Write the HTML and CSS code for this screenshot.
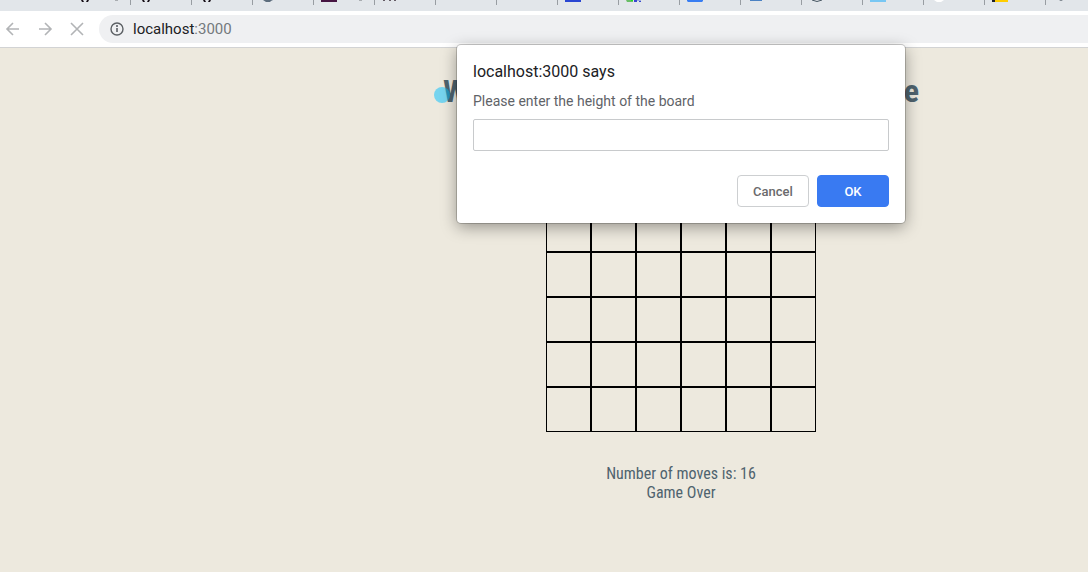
FILE: index.html
```html
<!DOCTYPE html>
<html lang="en">
<head>
<meta charset="utf-8">
<title>localhost:3000</title>
<link rel="stylesheet" href="styles.css">
</head>
<body>
<div class="tabs">
  <div class="tab"><svg class="favicon" viewBox="0 0 16 2"><path d="M4 0h2l1 2H5zM12 0h-2l-1 2h2z" fill="#181018"/></svg><i class="tab-close"></i></div>
  <div class="tab"><svg class="favicon" viewBox="0 0 16 2"><path d="M4 0h2l1 2H5zM12 0h-2l-1 2h2z" fill="#181018"/></svg></div>
  <div class="tab"><svg class="favicon" viewBox="0 0 16 2"><path d="M4 0h2l1 2H5zM12 0h-2l-1 2h2z" fill="#181018"/></svg></div>
  <div class="tab"><svg class="favicon" viewBox="0 0 16 2"><path d="M3 0h10l-2 1-1 1H6z" fill="#5d6d7d"/></svg></div>
  <div class="tab"><svg class="favicon" viewBox="0 0 16 2"><path d="M0 0h16v2H0z" fill="#461542"/></svg><i class="tab-close"></i></div>
  <div class="tab"><svg class="favicon" viewBox="0 0 16 2"><path d="M1 0h2v1H1zM7 0h2v1H7zM12 0h2v1h-2z" fill="#655c65"/></svg></div>
  <div class="tab"></div>
  <div class="tab"></div>
  <div class="tab"><svg class="favicon" viewBox="0 0 16 2"><path d="M0 0h16v2H0z" fill="#2946d2"/></svg></div>
  <div class="tab"><svg class="favicon" viewBox="0 0 16 2"><path d="M0 0h7v2H1z" fill="#69bd66"/><path d="M5 0h2v1H5z" fill="#20df20"/><path d="M8 0h3v2H8z" fill="#3848ce"/><path d="M11 0h4v1h-4z" fill="#9caddd"/><path d="M13 1h2v1h-2z" fill="#3848ce"/></svg></div>
  <div class="tab"><svg class="favicon" viewBox="0 0 16 2"><path d="M0 0h16v1l-1 1H1L0 1z" fill="#387df2"/></svg></div>
  <div class="tab"><svg class="favicon" viewBox="0 0 16 2"><path d="M2 0h12v1H2z" fill="#4c82c3"/></svg></div>
  <div class="tab"><svg class="favicon" viewBox="0 0 16 2"><path d="M3 0q5 3 10 0" fill="none" stroke="#455561" stroke-width="1"/></svg></div>
  <div class="tab"><svg class="favicon" viewBox="0 0 16 2"><path d="M0 0h16v2H0z" fill="#78c7f3"/></svg></div>
  <div class="tab"><svg class="favicon" viewBox="0 0 16 2"><path d="M3 0h10l-3 2H6z" fill="#fff"/></svg></div>
  <div class="tab"><svg class="favicon" viewBox="0 0 16 2"><path d="M0 0h3v2H0z" fill="#20202a"/><path d="M3 0h13v2H3z" fill="#ffcd00"/></svg></div>
  <div class="tab"><svg class="favicon" viewBox="0 0 16 2"><path d="M6 0h4L8 1z" fill="#68727b"/></svg></div>
</div>
<div class="toolbar">
  <div class="navs">
    <button class="nav" aria-label="Back"><svg viewBox="0 0 16 16"><path d="M14 8H3M8 2L2 8l6 6"/></svg></button>
    <button class="nav" aria-label="Forward"><svg viewBox="0 0 16 16"><path d="M2 8h11M8 2l6 6-6 6"/></svg></button>
    <button class="nav" aria-label="Stop"><svg viewBox="0 0 16 16"><path d="M2 2l12 12M14 2L2 14"/></svg></button>
  </div>
  <div class="address">
    <svg class="info" viewBox="0 0 14 14"><circle cx="7" cy="7" r="6"/><path d="M7 6v4M7 3v2"/></svg>
    <span>localhost<span class="port">:3000</span></span>
  </div>
</div>
<main class="page">
  <div class="game">
    <h1 class="heading"><span>W</span><span>e</span></h1>
    <div class="board">
      <div class="cells" id="cells"></div>
    </div>
    <p class="status">Number of moves is: 16<br>Game Over</p>
  </div>
</main>
<span class="bubble"></span>
<form class="dialog" role="dialog" aria-labelledby="dialog-title">
  <h2 class="dialog-title" id="dialog-title">localhost:3000 says</h2>
  <label class="dialog-label" for="height">Please enter the height of the board</label>
  <input class="dialog-input" id="height" type="text">
  <div class="actions">
    <button class="button" type="button">Cancel</button>
    <button class="button primary" type="button">OK</button>
  </div>
</form>
<script src="board.js"></script>
</body>
</html>
```
FILE: styles.css
```css
* { box-sizing: border-box; }
body {
  margin: 0;
  min-height: 100vh;
  display: flex;
  flex-direction: column;
  overflow: hidden;
  background: #ede9de;
  font-family: Roboto, "Liberation Sans", sans-serif;
}
.tabs {
  display: flex;
  height: 11px;
  padding-left: 70px;
  background: #e2e6ea;
  overflow: hidden;
}
.tab {
  flex: none;
  display: flex;
  width: 61px;
  height: 5px;
  padding-left: 7px;
  border-right: 1px solid #989da2;
}
.favicon { width: 16px; height: 2px; }
.tab-close { width: 3px; height: 1px; margin-left: 22px; background: #a9adb1; }
.toolbar {
  display: flex;
  align-items: center;
  gap: 14px;
  height: 37px;
  padding-left: 5px;
  background: #fff;
  border-bottom: 1px solid #d2d3d4;
}
.navs { display: flex; gap: 16px; }
.nav {
  width: 16px;
  height: 16px;
  padding: 0;
  border: 0;
  background: none;
}
.nav svg { display: block; fill: none; stroke: #b2b4b6; stroke-width: 1.6; }
.address {
  flex: 1;
  display: flex;
  align-items: center;
  gap: 9px;
  height: 28px;
  padding-left: 11px;
  border-radius: 14px 0 0 14px;
  background: #eff0f2;
  color: #202124;
  font-size: 15px;
}
.info { width: 14px; fill: none; stroke: #5c6064; stroke-width: 1.6; }
.info circle { stroke-width: 1.4; }
.port { color: #74797d; }
.page {
  flex: 1;
  padding-left: 274px;
  color: #4f636e;
  font-family: "Roboto Condensed", "Liberation Sans Narrow", Roboto, sans-serif;
}
.game { display: flex; flex-direction: column; align-items: center; }
.heading {
  display: flex;
  justify-content: space-between;
  width: 476px;
  margin: 24px 0 0;
  font-size: 32px;
  line-height: 38px;
}
.board { margin-top: 52px; }
.cells { display: grid; grid-template-columns: repeat(6, 45px); grid-auto-rows: 45px; }
.cell { border: 1px solid #000; }
.status { margin: 32px 0 0; font-size: 16px; line-height: 19px; text-align: center; }
.bubble {
  position: absolute;
  left: 434px;
  top: 87px;
  width: 16px;
  height: 16px;
  border-radius: 50%;
  background: #00bfff80;
}
.dialog {
  position: absolute;
  left: 457px;
  top: 45px;
  display: flex;
  flex-direction: column;
  width: 448px;
  padding: 16px;
  border-radius: 4px;
  background: #fff;
  box-shadow: 0 0 0 1px #00000030, 0 4px 16px #00000060;
}
.dialog-title { margin: 0; color: #202124; font-size: 16px; font-weight: 400; line-height: 22px; }
.dialog-label { margin-top: 8px; color: #5f6368; font-size: 14px; line-height: 20px; }
.dialog-input {
  height: 32px;
  margin-top: 8px;
  padding: 0 8px;
  border: 1px solid #c8cacc;
  border-radius: 2px;
  background: #fff;
  font: inherit;
}
.actions { display: flex; justify-content: flex-end; gap: 8px; margin-top: 24px; }
.button {
  width: 72px;
  height: 32px;
  padding: 0;
  border: 1px solid #cdcfd1;
  border-radius: 4px;
  background: #fff;
  color: #6a6a6c;
  font-family: inherit;
  font-size: 13px;
  font-weight: 500;
}
.primary { border-color: #397af2; background: #397af2; color: #fff; }
```
FILE: board.js
```javascript
const cells = document.getElementById("cells");
for (let i = 0; i < 36; i++) {
  const cell = document.createElement("div");
  cell.className = "cell";
  cells.append(cell);
}
```
